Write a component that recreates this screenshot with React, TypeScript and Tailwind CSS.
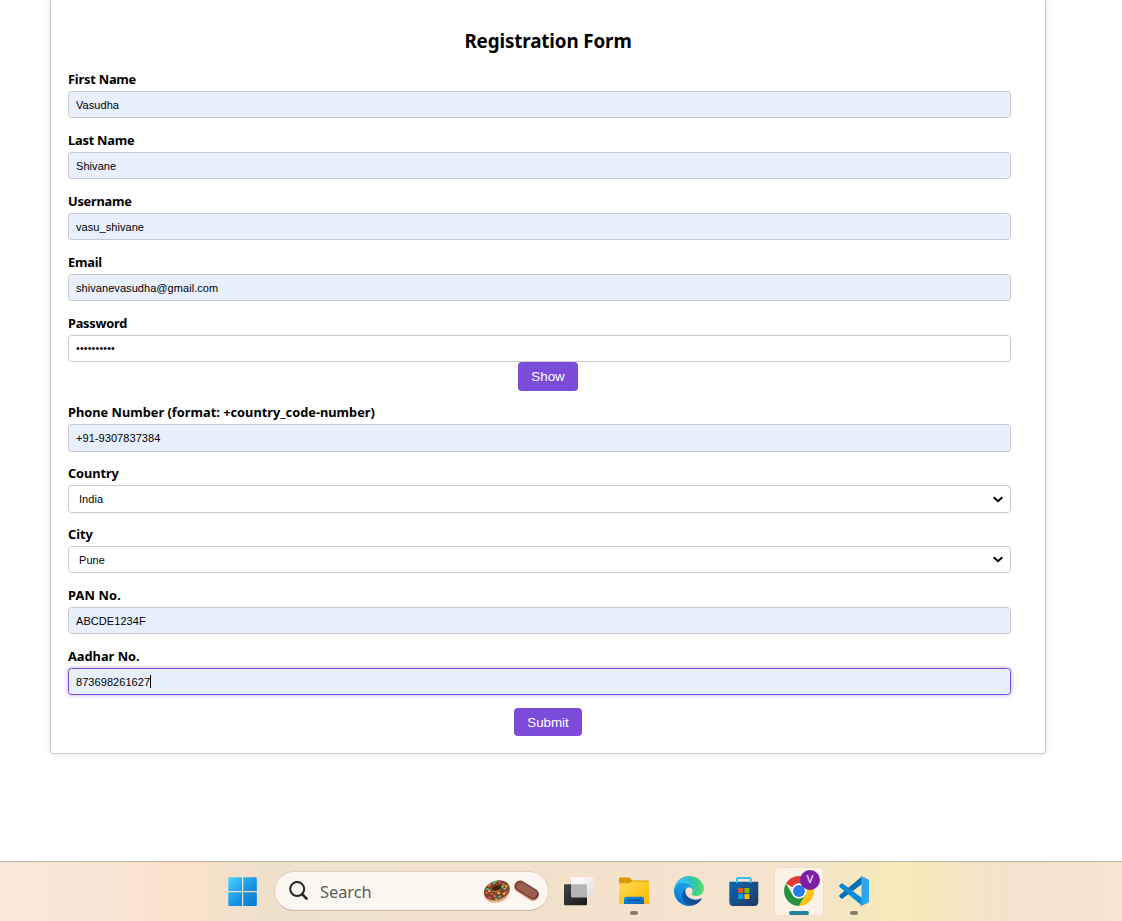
import type { ReactNode } from "react";

type FieldProps = {
  label: string;
  value: string;
  kind?: "filled" | "plain" | "select" | "focused";
  tall?: boolean;
  spacing?: string;
  labelSpacing?: string;
};

const boxStyles = {
  filled: "border-[#c9cacd] bg-[#e8effd] pl-[7px]",
  plain: "border-[#cbcbcb] bg-white pl-[7px] pb-[2px]",
  select: "border-[#cbcbcb] bg-white pl-[10px]",
  focused: "border-[#7c4ddb] bg-[#e8effd] pl-[7px] shadow-[0_0_4px_rgba(120,75,220,0.5)]",
};

function Field({ label, value, kind = "filled", tall, spacing = "text-[11px] tracking-[0.06px]", labelSpacing = "tracking-normal" }: FieldProps) {
  return (
    <div className="flex flex-col">
      <div className={`h-[21px] whitespace-nowrap font-['Noto_Sans',sans-serif] text-[12.8px] font-bold leading-[18px] ${labelSpacing}`}>{label}</div>
      <div className={`flex w-[943px] items-center justify-between rounded-[3.5px] border pr-[7px] ${tall ? "h-[28px]" : "h-[27px]"} ${boxStyles[kind]}`}>
        <div className={`flex items-center leading-[14px] ${spacing}`}>
          {value}
          {kind === "focused" && <span className="h-[13px] w-px bg-black" />}
        </div>
        {kind === "select" && (
          <svg width="10" height="7" viewBox="0 0 10 7" fill="none" stroke="#000" strokeWidth="2">
            <path d="M0.7 1.2 5 5.2 9.3 1.2" />
          </svg>
        )}
      </div>
    </div>
  );
}

function Button({ children, size }: { children: ReactNode; size: string }) {
  return (
    <div className={`flex items-center justify-center self-center rounded-[4px] bg-[#7b4cda] text-[13.33px] text-white ${size}`}>{children}</div>
  );
}

function WindowsIcon() {
  return (
    <svg width="30" height="30" viewBox="0 0 30 30">
      <defs>
        <linearGradient id="win" x1="0" y1="0" x2="30" y2="30" gradientUnits="userSpaceOnUse">
          <stop stopColor="#50d3ff" />
          <stop offset="0.5" stopColor="#1897e9" />
          <stop offset="1" stopColor="#0074d4" />
        </linearGradient>
      </defs>
      <path fill="url(#win)" d="M1 .3H14V14H.3V1ZM15.2.3H28l.8.7V14H15.2ZM.3 15.2H14V29H1l-.7-.8ZM15.2 15.2h13.6v13l-.8.8H15.2Z" />
    </svg>
  );
}

function DonutIcon() {
  return (
    <svg width="28" height="24" viewBox="0 0 28 24">
      <ellipse cx="14" cy="13.5" rx="13.1" ry="9.7" fill="#e6a37c" transform="rotate(-18 14 13.5)" />
      <ellipse cx="13.8" cy="11.3" rx="13.2" ry="9.5" fill="#784627" transform="rotate(-18 13.8 11.3)" />
      <ellipse cx="13.3" cy="9.7" rx="5" ry="3.2" fill="#c58756" transform="rotate(-18 13.3 9.7)" />
      <ellipse cx="13.5" cy="9" rx="4.8" ry="2.7" fill="#46230f" transform="rotate(-18 13.5 9)" />
      <g strokeWidth="1.6" strokeLinecap="round">
        <path stroke="#f27a42" d="m6 7 1.5-1.4M11 17l1.6.3M20 5l1.2 1M3 13l1 1" />
        <path stroke="#5ec4d0" d="m4 10 1.4.4M10 4l1.6.2M21 10l1.3-.6M16 18l1.5-.7" />
        <path stroke="#e94f86" d="m8 14.5 1.6.4M16 3l1.5.4M23 13l.8-1M6 18.2l1.4.4" />
        <path stroke="#ffd34b" d="m15 14.3 1.5-.5M6 12.5l.6-1M20.5 15l1.3-.8M23 6.8l.7.8" />
        <path stroke="#7acb77" d="m19 8 1.2-.7M12.6 20l1.6.1M12 2.7l1.3-.5" />
      </g>
    </svg>
  );
}

function EclairIcon() {
  return (
    <svg width="28" height="24" viewBox="0 0 28 24">
      <path d="M7 7.7 20 16" stroke="#dc8e6c" strokeWidth="11.6" strokeLinecap="round" />
      <path d="M7.2 7 20.3 15" stroke="#703a31" strokeWidth="10.8" strokeLinecap="round" />
      <path d="M7.6 7.2 19.8 14.6" stroke="#985f52" strokeWidth="8.2" strokeLinecap="round" />
    </svg>
  );
}

function TaskViewIcon() {
  return (
    <svg width="30" height="30" viewBox="0 0 30 30">
      <defs>
        <linearGradient id="dark" x1="0" y1="0" x2="1" y2="1"><stop stopColor="#444" /><stop offset="1" stopColor="#181818" /></linearGradient>
        <linearGradient id="light" x1="0" y1="0" x2="1" y2="1"><stop stopColor="#fff" /><stop offset="1" stopColor="#dedede" /></linearGradient>
      </defs>
      <rect x="0" y="7.3" width="23" height="21" rx="1" fill="url(#dark)" />
      <rect x="7.3" y=".3" width="22.6" height="20" rx="1" fill="url(#light)" />
      <path d="M7.3 7.3H22q1 0 1 1v12H8.3q-1 0-1-1Z" fill="#b5b5b5" />
    </svg>
  );
}

function FolderIcon() {
  return (
    <svg width="30" height="30" viewBox="0 0 30 30">
      <defs>
        <linearGradient id="folder" x1="0" y1="0" x2="1" y2="1"><stop stopColor="#ffda57" /><stop offset="1" stopColor="#fcb900" /></linearGradient>
        <linearGradient id="tray" x1="0" y1="0" x2="1" y2="1"><stop stopColor="#1688db" /><stop offset="1" stopColor="#0964bd" /></linearGradient>
      </defs>
      <path fill="#d99a00" d="M1 .5h9q1.2 0 2 1.4L13 3.4h16l1 1v4H0V1.5q0-1 1-1Z" />
      <path fill="url(#folder)" d="M0 6.2h10.5L13 4.6h16q1 0 1 1V26q0 1-1 1H1q-1 0-1-1Z" />
      <path fill="url(#tray)" d="M5 27v-4.6q0-2.6 2.6-2.6h14.8q2.6 0 2.6 2.6V27Z" />
      <path d="M9 23.2h12.3" stroke="#07489c" strokeLinecap="round" />
    </svg>
  );
}

function EdgeIcon() {
  return (
    <svg width="30" height="30" viewBox="0 0 256 256">
      <defs>
        <linearGradient id="edgeA" x1="58" y1="177" x2="236" y2="177" gradientUnits="userSpaceOnUse"><stop stopColor="#0c59a4" /><stop offset="1" stopColor="#114a8b" /></linearGradient>
        <linearGradient id="edgeB" x1="145" y1="80" x2="48" y2="225" gradientUnits="userSpaceOnUse"><stop stopColor="#1b9de2" /><stop offset=".5" stopColor="#1595df" /><stop offset="1" stopColor="#0078d7" /></linearGradient>
        <radialGradient id="edgeC" cx="0" cy="0" r="1" gradientUnits="userSpaceOnUse" gradientTransform="translate(15 50) rotate(25) scale(270 200)"><stop stopColor="#35c1f1" /><stop offset=".25" stopColor="#34c1ed" /><stop offset=".5" stopColor="#2fc2c9" /><stop offset=".75" stopColor="#40d083" /><stop offset="1" stopColor="#66eb6e" /></radialGradient>
      </defs>
      <path fill="url(#edgeA)" d="M231 190.5c-3.4 1.8-6.9 3.4-10.5 4.7a101.9 101.9 0 0 1-35.9 6.4c-47.3 0-88.5-32.5-88.5-74.3 0-11.4 6.4-22.2 16.4-27.7-42.8 1.8-53.8 46.4-53.8 72.5 0 74 68.1 81.4 82.8 81.4 7.9 0 19.8-2.3 27-4.6l1.3-.4a128.3 128.3 0 0 0 66.6-52.8 4 4 0 0 0-5.4-5.2z" />
      <path fill="url(#edgeB)" d="M105.7 241.4a79.2 79.2 0 0 1-22.7-21.3 80.7 80.7 0 0 1 29.5-120.4c3.2-1.5 8.5-4.1 15.6-4a32.4 32.4 0 0 1 25.7 13 31.9 31.9 0 0 1 6.3 18.7c0-.2 24.5-79.6-80-79.6-43.9 0-80 41.6-80 78.2a130.2 130.2 0 0 0 12.1 56 128 128 0 0 0 156.4 67 75.5 75.5 0 0 1-62.8-8z" />
      <path fill="url(#edgeC)" d="M152.3 148.9c-.9 1-3.4 2.5-3.4 5.6 0 2.6 1.7 5.2 4.8 7.3 14.3 10 41.4 8.6 41.5 8.6 10.7 0 21.1-2.9 30.3-8.3a61.4 61.4 0 0 0 30.4-52.9c.3-22.4-8-37.3-11.3-43.9C223.5 23.9 177.7 0 128 0A128 128 0 0 0 0 126.2c.5-36.5 36.8-66 80-66 3.5 0 23.5.3 42 10a72.6 72.6 0 0 1 30.9 29.3c6.1 10.6 7.2 24.1 7.2 29.5s-2.7 13.3-7.8 19.9z" />
    </svg>
  );
}

function StoreIcon() {
  return (
    <svg width="30" height="30" viewBox="0 0 30 30">
      <defs>
        <linearGradient id="store" x1="0" y1="0" x2="1" y2="1"><stop stopColor="#0869b5" /><stop offset="1" stopColor="#273760" /></linearGradient>
      </defs>
      <path fill="url(#store)" d="M.3 4.8h29v20q0 4.2-4 4.2h-21q-4 0-4-4.2Z" />
      <path fill="none" stroke="#35bce9" strokeWidth="1.9" d="M8 6V2.1Q8 1 9.2 1h11.4q1.2 0 1.2 1.1V6" />
      <path fill="#f25022" d="M9.3 11h5v5h-5z" /><path fill="#7fba00" d="M15.4 11h5v5h-5z" />
      <path fill="#00a4ef" d="M9.3 17h5v5h-5z" /><path fill="#ffb900" d="M15.4 17h5v5h-5z" />
    </svg>
  );
}

function ChromeIcon() {
  return (
    <svg width="30" height="30" viewBox="0 0 48 48">
      <path fill="#e53c31" d="M24 0A24 24 0 0 1 44.78 12H24A12 12 0 0 0 13.61 18L3.22 12A24 24 0 0 1 24 0Z" />
      <path fill="#229342" d="M3.22 12 13.61 30A12 12 0 0 0 24 36h.01L34.39 30 24 48A24 24 0 0 1 3.22 12Z" />
      <path fill="#fbc116" d="M44.78 12A24 24 0 0 1 24 48L34.39 30A12 12 0 0 0 34.39 18L24 12Z" />
      <circle cx="24" cy="24" r="12" fill="#fff" /><circle cx="24" cy="24" r="9.5" fill="#287be8" />
    </svg>
  );
}

function CodeIcon() {
  return (
    <svg width="30" height="30" viewBox="0 0 100 100">
      <path fill="#0070b6" stroke="#0070b6" strokeWidth="3" strokeLinejoin="round" d="M75 4 2.8 64.2a3 3 0 0 0 0 4.6l5.2 4.8a3 3 0 0 0 3.6.2L76 26Z" />
      <path fill="#078ad8" stroke="#078ad8" strokeWidth="3" strokeLinejoin="round" d="M75 96 2.8 35.8a3 3 0 0 1 0-4.6L8 26.4a3 3 0 0 1 3.6-.2L76 74Z" />
      <path fill="#2ba6f1" d="M75.86 99.13a6.23 6.23 0 0 1-7.11-1.2A3.66 3.66 0 0 0 75 95.3V4.67a3.66 3.66 0 0 0-6.25-2.59A6.23 6.23 0 0 1 75.86.88l20.6 9.9A6.25 6.25 0 0 1 100 16.4v67.2a6.25 6.25 0 0 1-3.54 5.63z" />
    </svg>
  );
}

function Running({ active = false }: { active?: boolean }) {
  return (
    <span className={`absolute left-1/2 top-[35px] h-[4px] -translate-x-1/2 rounded-full ${active ? "w-[20px] bg-[#258596]" : "w-[8px] bg-[#87806f]"}`} />
  );
}

function Taskbar() {
  return (
    <footer className="flex h-[60px] items-start border-t border-[#b9ada0] bg-[linear-gradient(90deg,#f9e7d9_0%,#f8e5d4_10%,#f8e2ca_17%,#efe0cc_23%,#f0e1ca_31%,#f2e1ca_50%,#f5e2cd_58%,#f6e4cf_70%,#f4e6c2_75%,#f8eab6_80%,#f5e5c2_85%,#f5e2cb_89%,#f7e4d3_100%)] pl-[228px] pt-[5px]">
      <div className="mt-[9.5px] h-[30px] w-[30px]"><WindowsIcon /></div>
      <div className="ml-[16px] mt-[4px] flex h-[40px] w-[275px] items-center rounded-full border border-[#ddcfbe] border-b-[#c7b9a8] bg-[#fcf6f0] pl-[14px]">
        <svg width="20" height="20" viewBox="0 0 20 20" fill="none" stroke="#242424" strokeWidth="2">
          <circle cx="8.2" cy="8.1" r="7" /><path d="m13.2 13.2 4.4 4.4" strokeWidth="2.6" strokeLinecap="round" />
        </svg>
        <span className="ml-[11px] w-[163px] pt-[2px] font-['Noto_Sans',sans-serif] text-[16.4px] tracking-[-0.05px] text-[#605c58]">Search</span>
        <DonutIcon />
        <div className="ml-[2px]"><EclairIcon /></div>
      </div>
      <div className="ml-[15px] mt-[10px]"><TaskViewIcon /></div>
      <div className="relative ml-[25px] mt-[10px]"><FolderIcon /><div className="absolute inset-x-0 top-[-1px]"><Running /></div></div>
      <div className="ml-[25px] mt-[9px]"><EdgeIcon /></div>
      <div className="ml-[25px] mt-[10px]"><StoreIcon /></div>
      <div className="ml-[15px] h-[49px] w-[50px] rounded-[5px] border border-[#eadfce] bg-[#fcf3e6] pl-[9px] pt-[8px]">
        <div className="relative h-[30px] w-[30px]">
          <ChromeIcon />
          <span className="absolute left-[16px] top-[-6px] flex h-[20px] w-[20px] items-center justify-center rounded-full bg-[#7b1fa2] font-['Roboto',sans-serif] text-[11.5px] font-medium text-[#e3c4ed]">V</span>
          <Running active />
        </div>
      </div>
      <div className="relative ml-[15px] mt-[9px]"><CodeIcon /><Running /></div>
    </footer>
  );
}

export default function App() {
  return (
    <div className="h-[921px] w-[1122px] overflow-hidden bg-white font-['Liberation_Sans',sans-serif] text-black">
      <main className="h-[861px] overflow-hidden pl-[50px]">
        <section className="flex h-[754px] w-[996px] flex-col rounded-b-[4px] border border-t-0 border-[#cbcbcb] bg-white px-[17px] pt-[29px] shadow-[0_0_8px_rgba(0,0,0,0.1)]">
          <h1 className="mb-[17px] h-[24px] self-center whitespace-nowrap font-['Noto_Sans',sans-serif] text-[18.8px] font-bold leading-[25px] tracking-[-0.12px]">Registration Form</h1>
          <div className="flex flex-col gap-[13px]">
            <Field label="First Name" value="Vasudha" labelSpacing="tracking-[-0.2px]" />
            <Field label="Last Name" value="Shivane" labelSpacing="tracking-[-0.2px]" />
            <Field label="Username" value="vasu_shivane" labelSpacing="tracking-[-0.25px]" />
            <Field label="Email" value="shivanevasudha@gmail.com" labelSpacing="tracking-[-0.2px]" />
            <Field label="Password" value="••••••••••" kind="plain" spacing="text-[10.67px] tracking-[0.17px]" labelSpacing="tracking-[-0.25px]" />
          </div>
          <Button size="h-[29px] w-[60px]">Show</Button>
          <div className="mt-[12px] flex flex-col gap-[12px]">
            <Field label="Phone Number (format: +country_code-number)" value="+91-9307837384" tall />
            <Field label="Country" value="India" kind="select" tall labelSpacing="tracking-[-0.1px]" />
            <div className="flex flex-col gap-[13px]">
              <Field label="City" value="Pune" kind="select" />
              <Field label="PAN No." value="ABCDE1234F" labelSpacing="tracking-[0.15px]" />
              <Field label="Aadhar No." value="873698261627" kind="focused" />
            </div>
          </div>
          <div className="mt-[13px] flex justify-center"><Button size="h-[28px] w-[68px] pt-[1px]">Submit</Button></div>
        </section>
      </main>
      <Taskbar />
    </div>
  );
}
